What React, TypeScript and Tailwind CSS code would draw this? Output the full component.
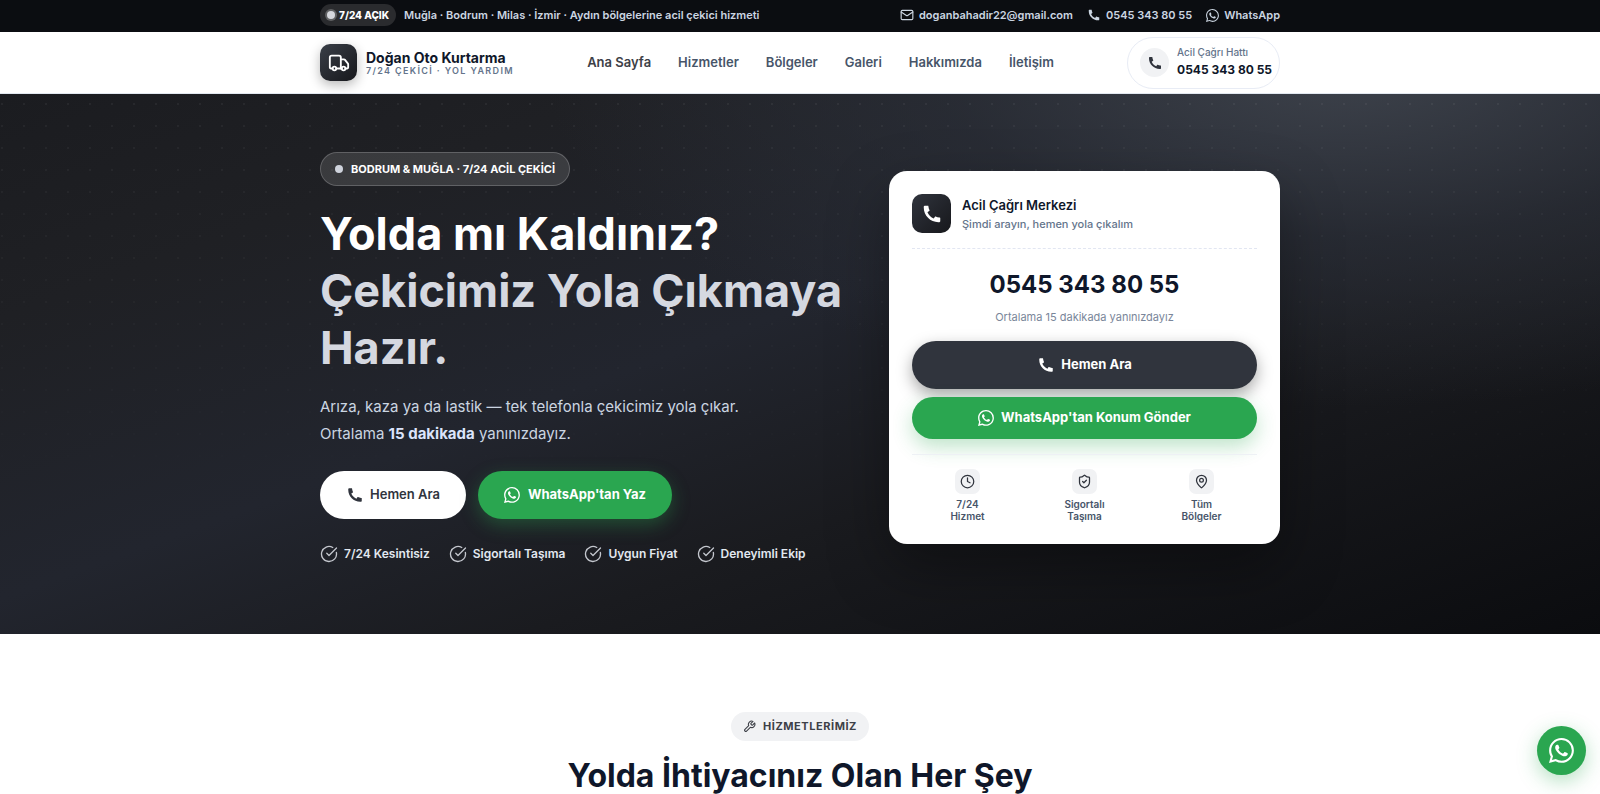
import type { ReactNode } from "react";
import { BsWhatsapp } from "react-icons/bs";
import { RiPhoneFill } from "react-icons/ri";
import { LuCircleCheckBig, LuClock, LuMail, LuMapPin, LuShieldCheck, LuTruck, LuWrench } from "react-icons/lu";

const PHONE = "0545 343 80 55";
const PHONE_HREF = "tel:+905453438055";
const WHATSAPP_HREF = "https://wa.me/905453438055";

const navItems = ["Ana Sayfa", "Hizmetler", "Bölgeler", "Galeri", "Hakkımızda", "İletişim"];
const features = ["7/24 Kesintisiz", "Sigortalı Taşıma", "Uygun Fiyat", "Deneyimli Ekip"];

const cardFacts: { icon: ReactNode; top: string; bottom: string }[] = [
  { icon: <LuClock className="size-[15px]" />, top: "7/24", bottom: "Hizmet" },
  { icon: <LuShieldCheck className="size-[15px]" />, top: "Sigortalı", bottom: "Taşıma" },
  { icon: <LuMapPin className="size-[15px]" />, top: "Tüm", bottom: "Bölgeler" },
];

function TopBar() {
  return (
    <div className="bg-[#0b0d11] text-[11px] font-semibold text-[#cbd5e1]">
      <div className="mx-auto flex h-8 max-w-[960px] items-center justify-between pb-[2px]">
        <div className="flex items-center gap-2">
          <span className="flex h-[22px] items-center gap-1 rounded-full bg-[#2a2b2e] px-[7px] text-[10px] font-extrabold text-white">
            <span className="size-2 rounded-full bg-[#d5d7dd] ring-2 ring-white/25" />
            7/24 AÇIK
          </span>
          <span>Muğla · Bodrum · Milas · İzmir · Aydın bölgelerine acil çekici hizmeti</span>
        </div>
        <div className="flex items-center gap-[14px]">
          <a href="mailto:doganbahadir22@gmail.com" className="flex items-center gap-[5px]">
            <LuMail className="size-[14px]" />
            doganbahadir22@gmail.com
          </a>
          <a href={PHONE_HREF} className="flex items-center gap-[5px]">
            <RiPhoneFill className="size-[14px]" />
            {PHONE}
          </a>
          <a href={WHATSAPP_HREF} className="flex items-center gap-[5px]">
            <BsWhatsapp className="size-[13px]" />
            WhatsApp
          </a>
        </div>
      </div>
    </div>
  );
}

function Header() {
  return (
    <header className="border-b border-slate-200 bg-white">
      <div className="mx-auto flex h-[61px] max-w-[960px] items-center justify-between">
        <a href="#" className="flex items-center gap-[9px]">
          <span className="flex size-[37px] items-center justify-center rounded-[10px] bg-linear-to-br from-[#3a3f48] to-[#17181c] text-white shadow-[0_4px_12px_rgba(0,0,0,0.28)]">
            <LuTruck className="size-[22px]" />
          </span>
          <span className="flex flex-col">
            <span className="text-[14px] leading-[15px] font-bold text-[#0f172a]">Doğan Oto Kurtarma</span>
            <span className="text-[9px] leading-[11px] font-semibold tracking-[0.15em] text-[#64748b]">
              7/24 ÇEKİCİ · YOL YARDIM
            </span>
          </span>
        </a>
        <nav className="flex items-center gap-[27px] text-[13px] font-semibold text-[#475569]">
          {navItems.map((item, i) => (
            <a key={item} href="#" className={i === 0 ? "text-[#3d4047]" : ""}>
              {item}
            </a>
          ))}
        </nav>
        <a href={PHONE_HREF} className="flex h-[52px] items-center gap-2 rounded-full border border-[#e8ecf5] pr-[7px] pl-3">
          <span className="flex size-[29px] items-center justify-center rounded-full bg-[#f1f2f4] text-[#30343d]">
            <RiPhoneFill className="size-4" />
          </span>
          <span className="flex flex-col pb-[2px]">
            <span className="text-[10px] leading-[17px] font-medium text-[#64748b]">Acil Çağrı Hattı</span>
            <span className="text-[12px] leading-[18px] font-bold text-[#0f172a]">{PHONE}</span>
          </span>
        </a>
      </div>
    </header>
  );
}

function CallCard() {
  return (
    <aside className="w-[391px] shrink-0 rounded-[18px] bg-white px-[23px] pt-[23px] pb-[22px] shadow-[0_24px_60px_rgba(0,0,0,0.35)]">
      <div className="flex items-center gap-[11px] border-b border-dashed border-[#e2e6f2] pb-[15px]">
        <span className="flex size-[39px] items-center justify-center rounded-[10px] bg-linear-to-br from-[#30343d] to-[#17181c] text-white">
          <RiPhoneFill className="size-[22px]" />
        </span>
        <div>
          <h2 className="text-[13px] leading-5 font-semibold text-[#0f172a]">Acil Çağrı Merkezi</h2>
          <p className="text-[11px] leading-[18px] font-medium text-[#64748b]">Şimdi arayın, hemen yola çıkalım</p>
        </div>
      </div>
      <div className="pt-[18px] text-center">
        <a href={PHONE_HREF} className="block text-[24px] leading-9 font-bold text-[#0f172a]">
          {PHONE}
        </a>
        <p className="mt-[5px] text-[11px] leading-[18px] text-[#7a869a]">Ortalama 15 dakikada yanınızdayız</p>
      </div>
      <a
        href={PHONE_HREF}
        className="mt-[15px] flex h-12 items-center justify-center gap-[6px] rounded-full bg-[#30343d] text-[13px] font-bold text-white shadow-[0_6px_16px_rgba(0,0,0,0.35)]"
      >
        <RiPhoneFill className="size-[18px]" />
        Hemen Ara
      </a>
      <a
        href={WHATSAPP_HREF}
        className="mt-2 flex h-[42px] items-center justify-center gap-[7px] rounded-full bg-[#2aa650] text-[13px] font-bold text-white shadow-[0_8px_20px_rgba(42,166,80,0.3)]"
      >
        <BsWhatsapp className="size-4" />
        WhatsApp'tan Konum Gönder
      </a>
      <ul className="mt-[15px] grid grid-cols-3 gap-[6px] border-t border-[#eef1f5] pt-[14px]">
        {cardFacts.map((fact) => (
          <li key={fact.bottom} className="flex flex-col items-center text-center text-[10px] leading-3 font-semibold text-[#475569]">
            <span className="mb-1 flex size-[25px] items-center justify-center rounded-[7px] bg-[#f1f2f4] text-[#30343d]">
              {fact.icon}
            </span>
            <span>{fact.top}</span>
            <span>{fact.bottom}</span>
          </li>
        ))}
      </ul>
    </aside>
  );
}

function Hero() {
  return (
    <section className="relative bg-[radial-gradient(ellipse_800px_340px_at_84%_-5%,rgba(64,69,78,0.9),rgba(44,48,57,0.65)_50%,rgba(34,37,44,0)),linear-gradient(160deg,#1b1c20_0%,#1f2024_20%,#22252e_45%,#1a1b1f_65%,#0b0c0f_100%)]">
      <div className="absolute inset-0 bg-[radial-gradient(circle,rgba(255,255,255,0.05)_1px,transparent_1px)] mask-[linear-gradient(to_bottom,black,transparent_80%)] bg-size-[22px_22px] bg-position-[13px_21px]" />
      <div className="relative mx-auto flex max-w-[960px] items-center justify-between pt-[58px] pb-[71px]">
        <div>
          <p className="inline-flex h-[34px] items-center gap-2 rounded-full border border-white/20 bg-white/12 px-[14px] text-[11px] font-bold text-white">
            <span className="size-2 rounded-full bg-[#cfd3dc]" />
            BODRUM &amp; MUĞLA · 7/24 ACİL ÇEKİCİ
          </p>
          <h1 className="mt-[19px] text-[45px] leading-[57px] font-bold whitespace-nowrap text-white">
            Yolda mı Kaldınız?
            <span className="block text-[#d5d8e0]">
              Çekicimiz Yola Çıkmaya
              <br />
              Hazır.
            </span>
          </h1>
          <p className="mt-[17px] text-[15px] leading-[27px] text-[#cbd5e1]">
            Arıza, kaza ya da lastik — tek telefonla çekicimiz yola çıkar.
            <br />
            Ortalama <strong className="font-bold text-[#dbe4fb]">15 dakikada</strong> yanınızdayız.
          </p>
          <div className="mt-6 flex gap-3">
            <a href={PHONE_HREF} className="flex h-12 w-[146px] items-center justify-center gap-[6px] rounded-full bg-white text-[13px] font-semibold text-[#30343d]">
              <RiPhoneFill className="size-[18px]" />
              Hemen Ara
            </a>
            <a
              href={WHATSAPP_HREF}
              className="flex h-12 w-[194px] items-center justify-center gap-2 rounded-full bg-[#2aa650] text-[13px] font-bold text-white shadow-[0_6px_18px_rgba(42,166,80,0.35)]"
            >
              <BsWhatsapp className="size-4" />
              WhatsApp'tan Yaz
            </a>
          </div>
          <ul className="mt-[26px] flex gap-[19px] text-[12px] leading-[18px] font-semibold text-[#e2e8f0]">
            {features.map((feature) => (
              <li key={feature} className="flex items-center gap-[6px]">
                <LuCircleCheckBig className="size-[18px] text-[#c4c7ce]" strokeWidth={1.75} />
                {feature}
              </li>
            ))}
          </ul>
        </div>
        <CallCard />
      </div>
    </section>
  );
}

function Services() {
  return (
    <section className="flex flex-col items-center bg-white pt-[78px]">
      <p className="flex h-[29px] items-center gap-[7px] rounded-full bg-[#f1f2f4] px-3 text-[11px] font-bold tracking-wider text-[#3d4047]">
        <LuWrench className="size-[13px]" />
        HİZMETLERİMİZ
      </p>
      <h2 className="mt-[14px] text-[32px] leading-[42px] font-bold text-[#0f172a]">Yolda İhtiyacınız Olan Her Şey</h2>
    </section>
  );
}

export default function App() {
  return (
    <div className="h-screen overflow-hidden bg-white font-['Inter','Noto_Sans',sans-serif]">
      <TopBar />
      <Header />
      <main>
        <Hero />
        <Services />
      </main>
      <a
        href={WHATSAPP_HREF}
        aria-label="WhatsApp"
        className="fixed right-[14px] bottom-[19px] flex size-[49px] items-center justify-center rounded-full bg-[#2aa650] text-white shadow-[0_6px_20px_rgba(42,166,80,0.35)]"
      >
        <BsWhatsapp className="size-[25px]" />
      </a>
    </div>
  );
}
